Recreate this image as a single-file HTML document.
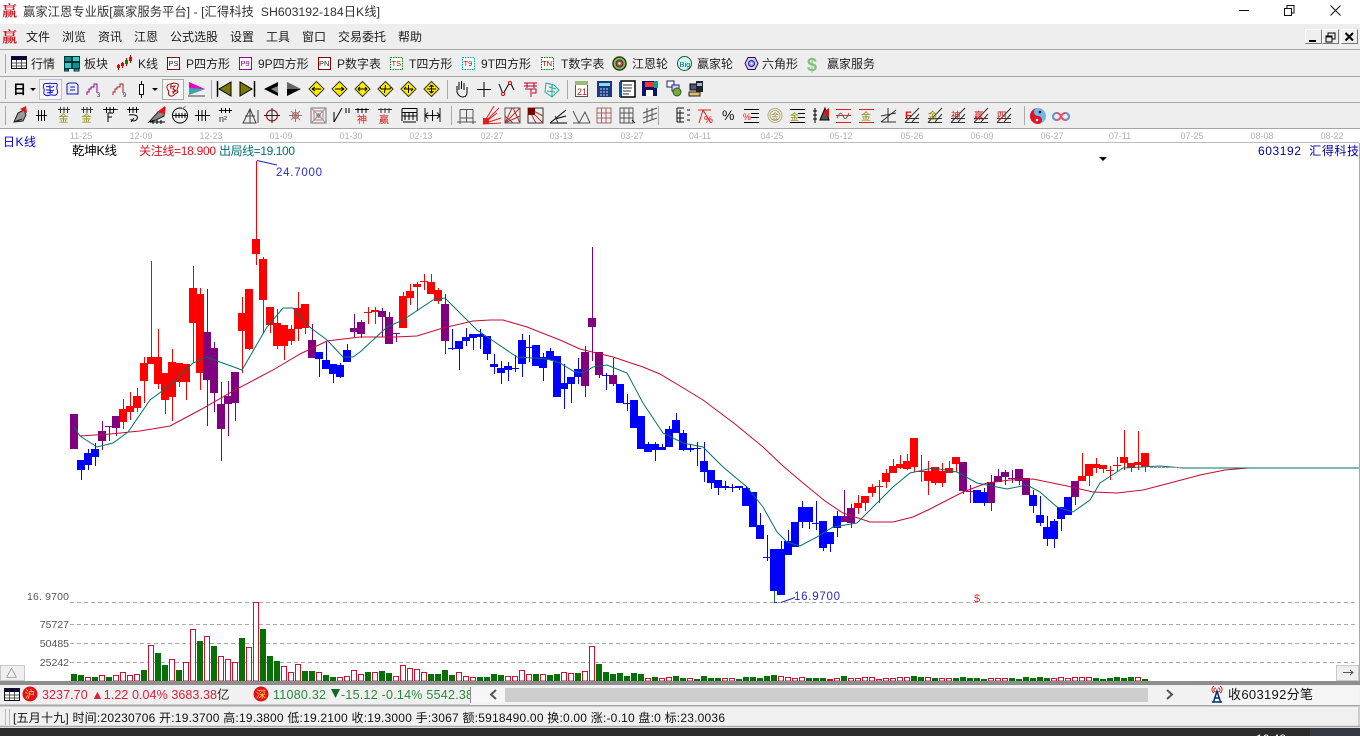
<!DOCTYPE html>
<html lang="zh"><head><meta charset="utf-8"><title>赢家江恩专业版</title>
<style>
html,body{margin:0;padding:0;background:#fff;width:1360px;height:736px;overflow:hidden}
svg{display:block;position:absolute;left:0;top:0}
text{font-family:"Liberation Sans","Noto Sans CJK SC",sans-serif;font-size:12px;fill:#222}
.m text{fill:#1c1c1c}
.ax text{font-size:9px;fill:#b0b0b0;text-anchor:middle}
.yl text{font-size:10.5px;fill:#555;text-anchor:end}
.ic{fill:none;stroke:#000;stroke-width:1}
.w{fill:none;stroke-width:1}
.b{fill:none;stroke-width:8}
</style></head><body>
<svg width="1360" height="736" viewBox="0 0 1360 736">
<!-- backgrounds -->
<rect width="1360" height="24" fill="#fff"/>
<rect y="24" width="1360" height="105" fill="#eeeeee"/>
<path d="M0 49.5H1360M0 76.5H1360M0 102.5H1360M0 128.5H1360" stroke="#a6a6a6"/>
<path d="M70 142.5H1359" stroke="#bbb"/>
<path d="M1359.5 143V682" stroke="#aaa"/>
<!-- title bar -->
<text x="2" y="16" style="font-size:15px;font-family:'Noto Serif CJK SC',serif;font-weight:700;fill:#c8141e">赢</text>
<text x="23" y="16" xml:space="preserve" textLength="357" style="font-size:12.3px;fill:#333">赢家江恩专业版[赢家服务平台] - [汇得科技  SH603192-184日K线]</text>
<path d="M1239 10.5H1249" stroke="#111"/>
<path d="M1284.5 8.500H1291.500V15.500H1284.500ZM1287 8V5.500H1294V13H1291.500" fill="none" stroke="#111"/>
<path d="M1330.500 5.500L1340.500 15.500M1340.500 5.500L1330.500 15.500" stroke="#111"/>
<!-- menu -->
<text x="2" y="42" style="font-size:15px;font-family:'Noto Serif CJK SC',serif;font-weight:700;fill:#c8141e">赢</text>
<g class="m" style="font-size:12px">
<text x="26" y="41">文件</text><text x="62" y="41">浏览</text><text x="98" y="41">资讯</text><text x="134" y="41">江恩</text><text x="170" y="41">公式选股</text><text x="230" y="41">设置</text><text x="266" y="41">工具</text><text x="302" y="41">窗口</text><text x="338" y="41">交易委托</text><text x="398" y="41">帮助</text>
</g>
<!-- mdi buttons -->
<g fill="#efefef"><rect x="1305" y="29" width="17" height="15"/><rect x="1322" y="29" width="17" height="15"/><rect x="1341" y="29" width="17" height="15"/></g>
<path d="M1305.500 43.500H1321.500V29.500M1322.500 43.500H1338.500V29.500M1341.500 43.500H1357.500V29.500" fill="none" stroke="#777"/>
<path d="M1305.500 43V29.500H1321M1322.500 43V29.500H1338M1341.500 43V29.500H1357" fill="none" stroke="#fff"/>
<path d="M1309 41H1316" stroke="#000" stroke-width="2"/>
<path d="M1326 36h6v6h-6zM1328 36v-3h7v6h-3M1326 37h6" fill="none" stroke="#000"/>
<path d="M1345.500 33L1353 40.500M1353 33L1345.500 40.500" stroke="#000" stroke-width="2"/>
<!-- grips -->
<path d="M5.500 54V73M5.500 80V99M5.500 106V125" stroke="#aaa"/>
<path d="M211.500 80V99M447.500 80V99M567.500 80V99M451.500 106V125M658.500 106V125M1024.500 106V125" stroke="#aaa"/>
<!-- toolbar 1 -->
<g>
<rect x="11.500" y="56.500" width="15" height="12" fill="#fff" stroke="#111"/><rect x="12" y="57" width="14" height="3" fill="#004"/><path d="M12 63h14M12 66h14M16.500 60v8M21.500 60v8" stroke="#555"/>
<g fill="#0b8f8f" stroke="#033"><rect x="64.500" y="56.500" width="7" height="5"/><rect x="72.500" y="56.500" width="7" height="5" fill="#3cc"/><rect x="64.500" y="62.500" width="7" height="6" fill="#3cc"/><rect x="72.500" y="62.500" width="7" height="6"/><rect x="64.500" y="69" width="4" height="2"/><rect x="74" y="69" width="5" height="2" fill="#3cc"/></g>
<path d="M118.500 64V70M122.500 62V68M126.500 58V66M130.500 55V63" stroke="#c00"/><path d="M117 65h3v3h-3zM121 63h3v3h-3zM129 57h3v4h-3z" fill="#e00"/><path d="M125 60h3v4h-3z" fill="#080"/>
<g fill="none" stroke-width="1"><rect x="167.500" y="57.500" width="12" height="12" stroke="#800" fill="#fff"/><rect x="239.500" y="57.500" width="12" height="12" stroke="#909" fill="#fff"/><rect x="318.500" y="57.500" width="12" height="12" stroke="#800" fill="#fff"/><rect x="390.500" y="57.500" width="12" height="12" stroke="#080" stroke-dasharray="1.500 1" fill="#fff"/><rect x="462.500" y="57.500" width="12" height="12" stroke="#0aa" stroke-dasharray="1.500 1" fill="#fff"/><rect x="541.500" y="57.500" width="12" height="12" stroke="#080" stroke-dasharray="1.500 1" fill="#fff"/></g>
<g style="font-size:7px"><text x="168.500" y="66" style="font-size:7.500px;fill:#222">PS</text><text x="240.500" y="66" style="font-size:7.500px;fill:#808">P9</text><text x="319" y="66" style="font-size:7.500px;fill:#222">PN</text><text x="391.500" y="66" style="font-size:7.500px;fill:#c00">TS</text><text x="463.500" y="66" style="font-size:7.500px;fill:#c00">T9</text><text x="542" y="66" style="font-size:7.500px;fill:#800">TN</text></g>
<text x="31" y="68">行情</text><text x="84" y="68">板块</text><text x="138" y="68">K线</text><text x="186" y="68">P四方形</text><text x="258" y="68">9P四方形</text><text x="337" y="68">P数字表</text><text x="409" y="68">T四方形</text><text x="481" y="68">9T四方形</text><text x="561" y="68">T数字表</text>
<circle cx="619.500" cy="63.500" r="6.500" fill="#6c6" stroke="#430" stroke-width="1.500"/><circle cx="619.500" cy="63.500" r="3.500" fill="#c44" stroke="#333"/><circle cx="619.500" cy="63.500" r="1.200" fill="#ffc"/>
<circle cx="684.500" cy="63.500" r="7" fill="#cfe" stroke="#254"/><text x="679.500" y="67" style="font-size:7.500px;fill:#158">Big</text>
<path d="M745 63.500L748 57.500H755L758 63.500L755 69.500H748Z" fill="#dcf" stroke="#406"/><circle cx="751.500" cy="63.500" r="3" fill="#8af" stroke="#225"/><circle cx="751.500" cy="63.500" r="1" fill="#fff"/>
<text x="807" y="71" style="font-size:18px;font-weight:700;fill:#7cc47c">$</text>
<text x="632" y="68">江恩轮</text><text x="697" y="68">赢家轮</text><text x="762" y="68">六角形</text><text x="827" y="68">赢家服务</text>
</g>
<!-- toolbar 2 -->
<g>
<text x="13" y="94" style="font-size:13px;font-weight:700;fill:#000">日</text><path d="M30 88h6l-3 3z" fill="#000"/>
<rect x="39.500" y="79.500" width="22" height="20" fill="#f6f6fb" stroke="#b8c4d8"/>
<path d="M44 84c3-2 4 1 6-1c3 2 5-1 7 1c1 2-1 3 0 5c1 3 1 4-1 6c-3 1-4-1-6 0c-2 1-4 1-6-1c-1-2 1-3 0-5c-1-2-1-3 0-5zM46 87c3-2 5 2 8-1M46 90c3-1 5 2 8 0M47 93c2-1 4 0 6-1M50 85c-1 3 1 5 0 9" class="ic" style="stroke:#11c"/>
<path d="M69 83h7l2 2v9H67v-10zM70 87h5M70 90h5" class="ic" style="stroke:#11b"/>
<path d="M87 95v-3h2v-3h2v-2h3v-3h3v9" class="ic" style="stroke:#909"/><text x="97" y="97" style="font-size:6px;fill:#222">3</text>
<path d="M113 95v-3h2v-3h2v-2h3v-3h3v9" class="ic" style="stroke:#a22"/><text x="123" y="97" style="font-size:6px;fill:#222">9</text>
<path d="M141.500 81V98" stroke="#000"/><rect x="139.500" y="84.500" width="4" height="10" fill="#fff" stroke="#000"/><path d="M152 88h6l-3 3z" fill="#000"/>
<rect x="162.500" y="79.500" width="21" height="20" fill="#f6f6f6" stroke="#aaa"/>
<path d="M167 86c2-3 5-2 7-3l4 1c1 3-1 4-1 6l1 2c-2 2-3 1-4 3c-2 2-4 1-5 0c-2-2 1-3-1-5c-1-1-1-3-1-4zM170 87l5-1-2 3 3 2-4 1M171 84v5M175 89l-2 5" class="ic" style="stroke:#a11"/>
<path d="M189 82V95L205 89Z" fill="#e0c"/><path d="M189 88L205 89L189 95Z" fill="#3aa"/><path d="M188 96H205" stroke="#444"/>
<path d="M217.500 81V97" stroke="#000" stroke-width="1.500"/><path d="M231 82V96L219 89Z" fill="#7a7a00" stroke="#000"/>
<path d="M254.500 81V97" stroke="#000" stroke-width="1.500"/><path d="M240 82V96L252 89Z" fill="#7a7a00" stroke="#000"/>
<path d="M278 82V96L264 89Z" fill="#000"/><path d="M278 86V93L271 89Z" fill="#888"/>
<path d="M287 82V96L301 89Z" fill="#888"/><path d="M287 82L301 89H287Z" fill="#666"/><path d="M287 89H301L287 96Z" fill="#000"/>
<g fill="#ffec00" stroke="#333"><path d="M316.500 81.500L324 89L316.500 96.500L309 89Z"/><path d="M339.500 81.500L347 89L339.500 96.500L332 89Z"/><path d="M362.500 81.500L370 89L362.500 96.500L355 89Z"/><path d="M385.500 81.500L393 89L385.500 96.500L378 89Z"/><path d="M408.500 81.500L416 89L408.500 96.500L401 89Z"/><path d="M431.500 81.500L439 89L431.500 96.500L424 89Z"/></g>
<path d="M312 89H321M312 89l3-2M312 89l3 2M335 89H344M344 89l-3-2M344 89l-3 2M358 89H367M358 89l2-2M358 89l2 2M367 89l-2-2M367 89l-2 2M381 89h9M381 89l-1-2M390 89l1-2M385.500 85l-1 8M404 89h9M408.500 85V93M404 89l2-2M413 89l-2 2M431.500 85V93M427 89H436M431.500 85l-2 2M431.500 85l2 2M431.500 93l-2-2M431.500 93l2-2" stroke="#000" fill="none"/>
<path d="M457 86v6c1 3 3 5 6 5s4-2 4-5v-5M459 90v-8M461.500 89v-8M464 90v-7" class="ic"/>
<path d="M484 82V97M477 89.500H491" stroke="#000"/>
<path d="M499 84l4 10l7-12l4 8" class="ic"/><circle cx="503" cy="94" r="1.500" fill="#fff" stroke="#c00"/><circle cx="510" cy="83" r="1.500" fill="#fff" stroke="#c00"/>
<path d="M524 83h13M524 86h13M527 83v5M534 83v5M525 89h11v4h-4M531 89v8" class="ic" style="stroke:#b03"/>
<path d="M546 83l8 2l5 5l-7 7l-7-5zM549 87l7 2M547 91l8 1M552 85v11" class="ic" style="stroke:#2a9"/>
<rect x="575.500" y="83.500" width="12" height="13" fill="#fff" stroke="#555"/><rect x="575" y="81" width="13" height="4" fill="#9b7"/><text x="577" y="95" style="font-size:9px;fill:#a22">21</text>
<rect x="597" y="81" width="15" height="16" fill="#1a3a80"/><rect x="599" y="83" width="11" height="3" fill="#8de"/><path d="M600 89h9M600 92h9M600 95h9" stroke="#cde" stroke-dasharray="2 1"/>
<rect x="621" y="81" width="14" height="16" fill="#fff" stroke="#000" stroke-width="1.500"/><path d="M623 85h9M623 88h9M623 91h8M623 94h6" stroke="#333"/><path d="M620 82V97" stroke="#05a" stroke-width="2"/>
<rect x="642" y="81" width="15" height="15" fill="#116"/><rect x="645" y="82" width="9" height="5" fill="#f33"/><rect x="646" y="90" width="7" height="6" fill="#fff"/><path d="M654 81h4v7h-4z" fill="#0a8"/>
<rect x="667" y="81" width="7" height="6" fill="#fff" stroke="#226"/><rect x="672" y="85" width="7" height="6" fill="#cdf" stroke="#226"/><circle cx="677" cy="92" r="4" fill="#7a3" stroke="#353"/>
<rect x="690" y="84" width="8" height="6" fill="#557" stroke="#000"/><rect x="696" y="81" width="7" height="11" fill="#222"/><rect x="697" y="83" width="5" height="3" fill="#8bf"/><rect x="689" y="92" width="11" height="4" fill="#d8c06a" stroke="#222"/>
</g>
<!-- toolbar 3 -->
<g>
<path d="M14 122l4-9l6-3l2 5l-3 6zM14 122l8-3" fill="#999" stroke="#222"/><path d="M20 109l6-3l1 7z" fill="#e11"/>
<g class="ic"><path id="t1" d="M36 115.500H47M38.500 110V121M41.500 110V121M44.500 110V121"/></g>
<path d="M58 109.500H70M60.500 107V113M64 107V113M67.500 107V113M110 109.500H118M103 109.500H110" class="ic" style="stroke:#333"/>
<text x="58.500" y="122" style="font-size:10px;fill:#8a8a00">金</text>
<path d="M81 109.500H93M83.500 107V113M87 107V113M90.500 107V113" class="ic" style="stroke:#333"/>
<text x="81.500" y="122" style="font-size:10px;fill:#8a8a00">金</text>
<path d="M104 109.500H116M106.500 107V113M110 107V113M113.500 107V113M108 113h5M108 113v9M108 117h4" class="ic"/>
<path d="M127 109.500H139M129.500 107V113M133 107V113M136.500 107V113M129 115c6-1 10 1 8 4c-2 3-6 2-6 0M134 118l-3 4" class="ic"/>
<path d="M149 122L158 112L165 108L164 116L156 120Z" fill="#888" stroke="#222"/><path d="M157 112L165 106L165 114Z" fill="#e11"/><path d="M150 122H165M153 120V124M157 120V124M161 120V124" class="ic"/>
<circle cx="180" cy="115.500" r="7.500" class="ic"/><path d="M173 115.500H187M176 113V118M179 113V118M182 113V118M185 113V118" class="ic"/><path d="M182 109l4-3" stroke="#888"/>
<path d="M195 115.500H210M198.500 110V121M202 110V121M205.500 110V121" class="ic"/>
<path d="M219 110.500H232M221.500 108V113M225.500 108V113M229.500 108V113" class="ic"/><text x="219" y="122" style="font-size:9px;fill:#222">n²</text>
<path d="M243 123L250 109L256 123ZM250 109V123M245 116H255M258 110V123" class="ic" style="stroke:#444"/>
<circle cx="272" cy="115.500" r="5.500" class="ic" style="stroke:#a00"/><path d="M264 115.500H280M272 108V123" stroke="#222"/>
<path d="M289 115.500H302M295.500 109V122M291 111L300 120M300 111L291 120" stroke="#c66" fill="none"/><circle cx="295.500" cy="115.500" r="3" fill="none" stroke="#777"/>
<rect x="311" y="108" width="15" height="15" fill="none" stroke="#777"/><rect x="314" y="111" width="9" height="9" fill="none" stroke="#c77"/><rect x="316.500" y="113.500" width="4" height="4" fill="#666"/><path d="M311 108l15 15M326 108l-15 15" stroke="#999"/>
<path d="M334 122V112M334 122L342 108M346 108V113M349 108V113" class="ic"/>
<path d="M355 109.500H369M358 108V113M362 108V113M366 108V113" class="ic"/><text x="357" y="123" style="font-size:10px;fill:#e11">神</text>
<path d="M378 109.500H392M381 108V113M385 108V113M389 108V113" stroke="#333"/><text x="379" y="123" style="font-size:10px;fill:#c11">赢</text>
<path d="M402 108.500H417V121M402 108.500V121M402 112.500H417M402 116H417M405 112V120M409 112V120M413 112V120M403 122H416" class="ic"/>
<path d="M425 108V122M440 108V122M425 115.500H440M425 115.500l3-3M425 115.500l3 3M440 115.500l-3-3M440 115.500l-3 3M432.500 110V121" class="ic" style="stroke:#111"/>
<g class="ic" style="stroke:#555"><path d="M460 109.500H473M466.500 109.500V122M460 109.500V118H473V109.500M457 122H476M460 118v6M473 118v6"/></g>
<path d="M483 124L499 108M483 124L497 113M483 124L501 118M483 124L494 106M483 124L501 123" stroke="#d22" fill="none"/><path d="M483 118h6v6h-6z" fill="#d22"/>
<rect x="505" y="108" width="15" height="15" fill="none" stroke="#555"/><path d="M505 123L512 108M505 123L520 108M505 123L520 116M513 108L520 123M505 116L513 123" stroke="#a33" fill="none"/>
<rect x="528" y="108" width="15" height="15" fill="none" stroke="#333"/><path d="M528 108L543 123M528 108L536 123M528 108L543 116M528 108h6v6h-6z" stroke="#a33" fill="none"/><path d="M528 108h7v7h-7z" fill="#700"/>
<path d="M550 123H567M550 123L566 110M555 119L566 116" class="ic"/><path d="M558 123l-3-7" stroke="#444"/>
<path d="M573 111L579 123L585 112L590 123M573 123H590" class="ic" style="stroke:#555"/>
<path d="M597 108h14v15h-14zM597 113h14M597 118h14M601.500 108v15M606 108v15" fill="none" stroke="#a66"/>
<path d="M620 108h13v15h-13zM620 113h13M620 118h13M624 108v15M629 108v15" fill="none" stroke="#555"/><path d="M632 120l3 3" stroke="#000"/>
<path d="M643 113L657 108M643 118L657 113M643 123L657 118M647 108V122M652 108V120" class="ic" style="stroke:#555"/>
<path d="M677 108V122M677 108H684M677 113H684M677 118H684M677 122H684M680 110V122M687 110h3M687 115h3M687 120h3" class="ic" style="stroke:#111"/>
<path d="M698 110H711M703 110L699 123M703 110L711 123" class="ic" style="stroke:#d22"/><text x="704" y="123" style="font-size:10px;fill:#e11">%</text>
<text x="722" y="120" style="font-size:14px;fill:#111">%</text>
<path d="M744 109.500H759M751 113.500H759M751 117.500H759M744 122.500H759" class="ic"/><text x="743" y="120" style="font-size:9px;fill:#e11">%</text>
<circle cx="775" cy="115.500" r="7" fill="#fff8e0" stroke="#aa8"/><circle cx="775" cy="115.500" r="5" fill="none" stroke="#aa8"/><text x="771" y="119" style="font-size:8px;fill:#885">金</text>
<path d="M790 109.500H805M798 113.500H805M798 117.500H805M790 122.500H805" class="ic"/><text x="790" y="120" style="font-size:9px;fill:#8a8a00">金</text>
<path d="M815 108V123M813 111h4M813 115h4M813 119h4" class="ic"/><path d="M820 120L825 108L829 120Z" fill="#555" stroke="#000"/><path d="M823 112L829 108V118Z" fill="#d11"/>
<path d="M836 109.500H851M836 122.500H851M836 115.500H851" stroke="#d22"/><path d="M837 118c3-6 4-6 6-2s3 4 6-3" fill="none" stroke="#666"/>
<path d="M859 109.500H874M859 122.500H874" stroke="#d22"/><text x="861" y="120" style="font-size:10px;fill:#8a8a00">金</text>
<path d="M881 122H896M881 122L896 110M881 116L896 113M888 108V122" class="ic" style="stroke:#333"/>
<g class="ic" style="stroke:#333"><path d="M905 122.500H919M905 118.500H919M905 122.500L919 108M912 122L919 114"/><path d="M928 122.500H942M928 118.500H942M928 122.500L942 108M935 122L942 114"/><path d="M951 122.500H965M951 118.500H965M951 122.500L965 108M958 122L965 114"/><path d="M974 122.500H988M974 118.500H988M974 122.500L988 108M981 122L988 114"/><path d="M997 122.500H1011M997 118.500H1011M997 122.500L1011 108M1004 122L1011 114"/></g>
<text x="905" y="119" style="font-size:11px;font-weight:700;fill:#d11">F</text><text x="928" y="119" style="font-size:9.500px;fill:#8a8a00">金</text><text x="951" y="119" style="font-size:9.500px;fill:#d11">神</text><text x="974" y="119" style="font-size:9.500px;fill:#c11">赢</text><text x="997" y="119" style="font-size:9.500px;fill:#c11">四</text>
<circle cx="1038" cy="116" r="8" fill="#6ab8ee"/><path d="M1038 108a8 8 0 0 0 0 16a4 4 0 0 0 0-8a4 4 0 0 1 0-8z" fill="#e3101e"/><circle cx="1040" cy="112" r="1.300" fill="#600"/><circle cx="1037" cy="120" r="1.300" fill="#fff"/>
<path d="M1061 116.500c-2-4-3.500-3.500-4.500-3.500a3.500 3.500 0 0 0 0 7c1 0 2.500 .5 4.500-3.500s3.500-3.500 4.500-3.500a3.500 3.500 0 0 1 0 7c-1 0-2.500 .5-4.500-3.500z" fill="none" stroke="#e0506a" stroke-width="2"/><path d="M1065.500 113a3.500 3.500 0 0 1 0 7" fill="none" stroke="#5a9ad8" stroke-width="2"/><path d="M1056.500 113a3.500 3.500 0 0 0 0 7" fill="none" stroke="#5a9ad8" stroke-width="2"/>
</g>
<!-- date axis -->
<g class="ax"><text x="81" y="139">11-25</text><text x="141" y="139">12-09</text><text x="211" y="139">12-23</text><text x="281" y="139">01-09</text><text x="351" y="139">01-30</text><text x="421" y="139">02-13</text><text x="492" y="139">02-27</text><text x="561" y="139">03-13</text><text x="632" y="139">03-27</text><text x="700" y="139">04-11</text><text x="772" y="139">04-25</text><text x="841" y="139">05-12</text><text x="912" y="139">05-26</text><text x="982" y="139">06-09</text><text x="1052" y="139">06-27</text><text x="1120" y="139">07-11</text><text x="1192" y="139">07-25</text><text x="1262" y="139">08-08</text><text x="1332" y="139">08-22</text></g>
<text x="3" y="146" textLength="33" style="font-size:12px;fill:#0000c8">日K线</text>
<text x="72" y="155" textLength="45" style="font-size:12.500px;fill:#000">乾坤K线</text>
<text x="139" y="155" textLength="77" style="font-size:12px;fill:#e01020">关注线=18.900</text>
<text x="219" y="155" textLength="76" style="font-size:12px;fill:#007070">出局线=19.100</text>
<text x="1258" y="155" xml:space="preserve" textLength="101" style="font-size:12px;fill:#0000a0">603192  汇得科技</text>
<path d="M1099 157H1107L1103 161Z" fill="#000"/>
<!-- candles: wicks -->
<path class="w" stroke="#ff0000" d="M123.500 399V429M130.500 392V420M137.500 388V412M144.500 357V403M151.500 261V364M158.500 329V389M165.500 373V414M172.500 349V421M179.500 363V387M186.500 364V400M193.500 266V363M200.500 288V390M242.500 297V373M249.500 289V350M256.500 161V265M263.500 257V333M270.500 307V333M277.500 309V349M284.500 325V360M291.500 325V345M298.500 292V341M305.500 304V334M368.500 307V324M375.500 307V324M403.500 292V328M410.500 284V305M417.500 282V311M424.500 274V290M431.500 274V294M438.500 288V304M858.500 495V514M865.500 496V511M872.500 484V497M879.500 480V503M886.500 469V488M893.500 459V473M900.500 455V469M907.500 454V470M914.500 438V472M921.500 455V482M928.500 461V495M935.500 467V485M942.500 463V487M949.500 461V473M956.500 457V472M1082.500 453V481M1089.500 464V486M1096.500 458V473M1103.500 465V473M1110.500 466V480M1117.500 457V472M1124.500 430V470M1131.500 463V472M1138.500 431V470M1145.500 453V472"/>
<path class="w" stroke="#800080" d="M74.500 414V449M102.500 421V450M109.500 426V441M116.500 416V436M207.500 289V426M214.500 342V412M221.500 382V461M228.500 381V436M235.500 372V421M312.500 324V358M354.500 314V337M361.500 320V338M382.500 308V337M389.500 312V344M396.500 333V342M445.500 294V354M585.500 346V397M592.500 247V361M599.500 352V378M613.500 358V386M844.500 490V522M851.500 504V528M963.500 462V494M970.500 485V503M991.500 475V511M998.500 469V482M1005.500 470V485M1012.500 470V483M1019.500 469V485M1026.500 478V495M1075.500 481V505"/>
<path class="w" stroke="#0000ff" d="M81.500 460V480M88.500 449V470M95.500 443V466M319.500 352V377M326.500 342V369M333.500 364V383M340.500 363V378M347.500 344V362M452.500 329V350M459.500 341V370M466.500 328V346M473.500 334V350M480.500 329V349M487.500 336V360M494.500 354V374M501.500 361V384M508.500 362V381M515.500 355V372M522.500 334V377M529.500 335V362M536.500 345V366M543.500 353V381M550.500 348V360M557.500 356V397M564.500 364V409M571.500 377V403M578.500 358V384M606.500 373V390M620.500 384V403M627.500 394V411M634.500 400V428M641.500 416V449M648.500 442V452M655.500 442V461M662.500 444V450M669.500 426V447M676.500 413V433M683.500 430V451M690.500 444V452M697.500 442V466M704.500 442V482M711.500 470V489M718.500 480V495M725.500 481V490M732.500 484V492M739.500 486V490M746.500 486V506M753.500 492V527M760.500 513V539M767.500 535V561M781.500 541V595M788.500 530V555M795.500 522V547M802.500 501V528M809.500 507V529M816.500 501V530M823.500 521V551M830.500 532V552M837.500 511V537M977.500 490V503M984.500 488V506M1033.500 490V513M1040.500 496V526M1047.500 516V546M1054.500 519V548M1061.500 507V531M1068.500 497V515"/>
<path class="w" stroke="#1a7a1a" d="M774.500 549V602"/>
<!-- candles: bodies -->
<path class="b" stroke="#ff0000" d="M123 409V422M130 406V412M137 396V408M144 363V381M151 357V364M158 357V384M165 373V400M172 362V397M179 363V382M186 364V382M193 288V323M200 294V373M242 313V331M249 289V349M256 239V254M263 259V300M270 307V325M277 323V346M284 325V346M291 329V341M298 308V329M305 304V328M368 312V313M375 310V312M403 296V328M410 291V298M417 284V287M424 281V282M431 282V294M438 290V301M858 503V508M865 496V503M872 487V493M879 486V487M886 473V482M893 466V473M900 464V468M907 461V469M914 438V467M921 471V472M928 471V481M935 467V483M942 471V483M949 468V473M956 457V464M1082 476V481M1089 464V476M1096 464V468M1103 465V469M1110 470V471M1117 465V466M1124 457V463M1131 463V468M1138 462V465M1145 453V467"/>
<path class="b" stroke="#800080" d="M74 414V449M102 431V441M109 426V427M116 416V428M207 332V380M214 348V393M221 404V429M228 396V404M235 372V403M312 340V358M354 328V332M361 322V334M382 311V317M389 317V344M396 333V334M445 304V341M585 352V386M592 318V327M599 352V375M613 375V384M844 516V522M851 508V523M963 462V491M970 491V492M991 482V503M998 476V482M1005 472V477M1012 478V479M1019 469V481M1026 478V495M1075 481V497"/>
<path class="b" stroke="#0000ff" d="M81 460V470M88 453V465M95 449V457M319 352V359M326 360V369M333 364V374M340 365V377M347 350V362M452 348V349M459 341V349M466 337V341M473 334V338M480 334V337M487 336V354M494 364V367M501 368V373M508 366V370M515 368V369M522 340V364M529 347V348M536 345V366M543 357V368M550 351V360M557 356V397M564 383V389M571 377V384M578 369V377M606 375V376M620 384V403M627 403V404M634 400V428M641 416V449M648 444V452M655 444V450M662 447V450M669 429V447M676 420V433M683 433V450M690 448V450M697 448V449M704 461V472M711 470V483M718 480V488M725 486V488M732 487V488M739 486V488M746 488V506M753 492V527M760 525V539M767 557V558M774 549V591M781 549V595M788 541V555M795 522V547M802 507V522M809 507V522M816 523V524M823 521V548M830 532V544M837 516V528M977 490V503M984 492V503M1033 495V506M1040 515V523M1047 527V539M1054 521V539M1061 507V519M1068 497V515"/>
<!-- MA lines -->
<path fill="none" stroke="#c80a32" d="M80 436L110 434L140 431L170 426L200 410L235 390L273 370L300 354L327 341L360 337L395 337L417 336L443 328L473 321L490 320L503 320L527 327L560 340L580 349L613 357L643 367L660 374L680 386L703 400L735 424L763 447L783 466L803 483L825 501L843 513L870 522L893 522L913 517L930 509L963 492L987 483L1010 480L1033 479L1067 486L1093 492L1117 493L1143 490L1170 483L1200 475L1225 470L1248 468"/>
<path fill="none" stroke="#007070" d="M74 427L80 436L97 447L113 443L128 432L150 400L173 383L193 363L207 357L220 362L242 370L267 327L283 308L293 308L307 325L327 340L343 357L353 357L360 352L373 340L387 327L403 320L433 300L445 298L477 330L517 357L547 359L560 363L573 371L583 373L593 367L607 365L627 373L643 403L663 433L683 443L703 447L723 467L747 487L763 507L777 532L787 542L800 546L817 537L833 527L857 523L870 510L893 487L910 473L933 468L957 472L977 483L1007 489L1027 485L1040 492L1057 507L1073 512L1090 500L1100 483L1123 468L1160 466L1183 468H1359"/>
<path stroke="#999" stroke-dasharray="3 1" d="M1150 467.500H1183" fill="none"/>
<!-- high / low markers -->
<path d="M257 160.500L277 165" stroke="#2222c0" fill="none"/>
<text x="276" y="176" textLength="46" style="font-size:11.500px;fill:#2a2ac8">24.7000</text>
<path d="M774 602.500H781L795 597.500" stroke="#2222c0" fill="none"/>
<text x="794" y="600" textLength="46" style="font-size:11.500px;fill:#2a2ac8">16.9700</text>
<text x="974" y="602" style="font-size:11px;fill:#e03030">$</text>
<!-- grid -->
<path stroke="#aaa" stroke-dasharray="4 3" fill="none" d="M70 602.500H1358M70 624.500H1358M70 643.500H1358M70 662.500H1358"/>
<g class="yl"><text x="27" y="600" xml:space="preserve" textLength="42" style="text-anchor:start">16. 9700</text><text x="69" y="628">75727</text><text x="69" y="647">50485</text><text x="69" y="666">25242</text></g>
<!-- volumes -->
<path fill="none" stroke="#067006" stroke-width="6" d="M74 674V681M81 675V681M95 677V681M109 677V681M144 670V681M158 653V681M165 665V681M179 670V681M200 641V681M214 646V681M242 638V681M263 629V681M270 656V681M277 661V681M305 671V681M312 671V681M326 675V681M333 677V681M368 672V681M382 671V681M389 673V681M431 674V681M438 674V681M445 670V681M452 675V681M480 677V681M487 677V681M494 674V681M501 675V681M536 674V681M550 675V681M557 674V681M578 673V681M599 664V681M606 672V681M613 674V681M620 673V681M627 676V681M634 673V681M641 674V681M655 677V681M676 676V681M683 678V681M697 679V681M704 676V681M711 678V681M718 678V681M739 679V681M746 677V681M753 677V681M760 678V681M767 676V681M774 675V681M809 678V681M816 678V681M823 678V681M844 676V681M914 676V681M921 677V681M935 678V681M956 678V681M963 677V681M970 678V681M977 678V681M984 679V681M1012 678V681M1019 679V681M1026 677V681M1033 678V681M1040 677V681M1047 678V681M1096 678V681M1103 679V681M1110 678V681M1117 677V681M1124 678V681M1131 677V681M1145 679V681"/>
<path fill="#c8102e" d="M827 679h6v2h-6z"/>
<path fill="#fff" stroke="#d0102c" d="M85.500 677.500h5V681h-5zM99.500 675.500h5V681h-5zM113.500 675.500h5V681h-5zM120.500 672.500h5V681h-5zM127.500 675.500h5V681h-5zM134.500 674.500h5V681h-5zM148.500 645.500h5V681h-5zM169.500 659.500h5V681h-5zM183.500 662.500h5V681h-5zM190.500 629.500h5V681h-5zM204.500 636.500h5V681h-5zM218.500 656.500h5V681h-5zM225.500 659.500h5V681h-5zM232.500 662.500h5V681h-5zM246.500 647.500h5V681h-5zM253.500 602.500h5V681h-5zM281.500 666.500h5V681h-5zM288.500 672.500h5V681h-5zM295.500 664.500h5V681h-5zM316.500 672.500h5V681h-5zM337.500 677.500h5V681h-5zM344.500 676.500h5V681h-5zM351.500 670.500h5V681h-5zM358.500 674.500h5V681h-5zM372.500 672.500h5V681h-5zM393.500 676.500h5V681h-5zM400.500 665.500h5V681h-5zM407.500 668.500h5V681h-5zM414.500 669.500h5V681h-5zM421.500 672.500h5V681h-5zM456.500 672.500h5V681h-5zM463.500 676.500h5V681h-5zM470.500 677.500h5V681h-5zM505.500 676.500h5V681h-5zM512.500 676.500h5V681h-5zM519.500 670.500h5V681h-5zM526.500 674.500h5V681h-5zM540.500 674.500h5V681h-5zM561.500 672.500h5V681h-5zM568.500 673.500h5V681h-5zM582.500 671.500h5V681h-5zM589.500 646.500h5V681h-5zM645.500 678.500h5V681h-5zM659.500 678.500h5V681h-5zM666.500 677.500h5V681h-5zM687.500 678.500h5V681h-5zM722.500 678.500h5V681h-5zM729.500 678.500h5V681h-5zM778.500 676.500h5V681h-5zM785.500 677.500h5V681h-5zM792.500 678.500h5V681h-5zM799.500 677.500h5V681h-5zM834.500 678.500h5V681h-5zM848.500 678.500h5V681h-5zM855.500 678.500h5V681h-5zM862.500 677.500h5V681h-5zM869.500 677.500h5V681h-5zM876.500 679.500h5V681h-5zM883.500 678.500h5V681h-5zM890.500 678.500h5V681h-5zM897.500 677.500h5V681h-5zM904.500 677.500h5V681h-5zM925.500 677.500h5V681h-5zM939.500 678.500h5V681h-5zM946.500 678.500h5V681h-5zM988.500 678.500h5V681h-5zM995.500 678.500h5V681h-5zM1002.500 678.500h5V681h-5zM1051.500 678.500h5V681h-5zM1058.500 677.500h5V681h-5zM1065.500 678.500h5V681h-5zM1072.500 677.500h5V681h-5zM1079.500 677.500h5V681h-5zM1086.500 677.500h5V681h-5zM1135.500 677.500h5V681h-5z"/>
<!-- corner buttons -->
<rect x="0.500" y="665.500" width="24" height="15" fill="#efefef" stroke="#c8c8c8"/>
<text x="6" y="677" style="font-size:11px;fill:#444">△</text>
<rect x="1336.500" y="665.500" width="22" height="15" fill="#efefef" stroke="#c8c8c8"/>
<path d="M1343 672.500H1353M1350 670l3 2.500l-3 2.500" fill="none" stroke="#555"/>
<!-- bottom area -->
<rect y="682" width="1360" height="46" fill="#f0f0f0"/>
<rect y="681" width="1360" height="4" fill="#8e8e8e"/>
<path d="M0 705.500H1360" stroke="#a8a8a8" stroke-width="2"/>
<path d="M0 726.500H1360" stroke="#a8a8a8" stroke-width="1.500"/>
<path d="M1359 707V727" stroke="#aaa"/>
<path d="M5.500 709V725M9.500 709V725" stroke="#bbb"/>
<!-- status row 1 -->
<rect x="4.500" y="688.500" width="15" height="12" fill="#fff" stroke="#111"/><rect x="5" y="689" width="14" height="3" fill="#003"/><path d="M5 695h14M5 698h14M9.500 692v8M14.500 692v8" stroke="#555"/>
<circle cx="30" cy="694" r="7.500" fill="#e3101e"/><text x="25" y="698" style="font-size:10px;fill:#ffe040">沪</text>
<text x="42" y="699" xml:space="preserve" textLength="175" style="font-size:12.500px;fill:#e0203a">3237.70 ▲1.22 0.04% 3683.38</text>
<text x="217" y="699" style="font-size:12.500px;fill:#222">亿</text>
<circle cx="261" cy="694" r="7.500" fill="#e3101e"/><text x="256" y="698" style="font-size:10px;fill:#ffe040">深</text>
<text x="273" y="699" textLength="53" style="font-size:12.500px;fill:#2a8a3a">11080.32</text>
<path d="M331 689h9l-4.500 9z" fill="#0a6a20"/>
<text x="341" y="699" xml:space="preserve" textLength="132" style="font-size:12.500px;fill:#2a8a3a">-15.12 -0.14% 5542.38</text>
<rect x="470" y="686" width="900" height="19" fill="#f2f2f2"/>
<path d="M470.500 687V703" stroke="#888"/>
<rect x="471" y="687" width="34" height="16" fill="#f6f6f6"/>
<rect x="505" y="688" width="643" height="14" fill="#cdcdcd"/>
<path d="M496 690l-5 4.500l5 4.500" fill="none" stroke="#555" stroke-width="2"/>
<path d="M1167 690l5 4.500l-5 4.500" fill="none" stroke="#555" stroke-width="2"/>
<rect x="1208" y="686" width="151" height="19" fill="#f5f5f5"/>
<path d="M1217 691L1213.500 702H1220.500ZM1212 702H1222M1214.500 698H1219.500" fill="none" stroke="#00306a" stroke-width="1.500"/>
<path d="M1214 686a4 4 0 0 0 0 7M1220 686a4 4 0 0 1 0 7M1216 688a2 2 0 0 0 0 4M1218 688a2 2 0 0 1 0 4" fill="none" stroke="#e02020"/>
<text x="1228" y="699" textLength="85" style="font-size:13px;fill:#111">收603192分笔</text>
<!-- status row 2 -->
<text x="13" y="722" xml:space="preserve" textLength="712" style="font-size:12px;fill:#111">[五月十九] 时间:20230706 开:19.3700 高:19.3800 低:19.2100 收:19.3000 手:3067 额:5918490.00 换:0.00 涨:-0.10 盘:0 标:23.0036</text>
<!-- taskbar -->
<rect y="728" width="1360" height="8" fill="#2c2c2c"/>
<rect x="1310" y="728" width="50" height="8" fill="#333a44"/>
<text x="1256" y="743" style="font-size:12px;fill:#fff">16:48</text>
</svg>
</body></html>
